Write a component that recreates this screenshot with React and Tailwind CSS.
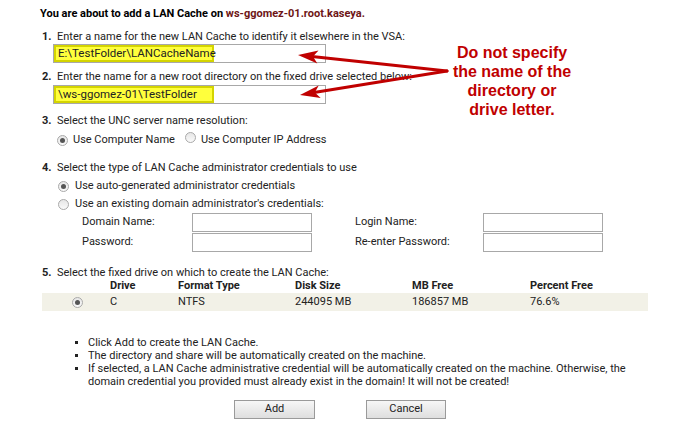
import React from "react";

const Radio = ({ checked }) => (
  <span className="inline-flex h-[11px] w-[11px] shrink-0 items-center justify-center rounded-full border border-[#a9a9a9] bg-gradient-to-b from-[#e6e6e6] to-[#fafafa]">
    {checked && <span className="h-[5px] w-[5px] rounded-full bg-[#555]" />}
  </span>
);

const Box = ({ className = "" }) => (
  <div className={"h-[19px] w-[120px] border border-[#a8a8a8] bg-white " + className} />
);

export default function App() {
  const font = { fontFamily: "Roboto, 'Liberation Sans', sans-serif" };
  return (
    <div className="relative h-[439px] w-[690px] overflow-hidden bg-white text-[11px] text-[#222]" style={font}>
      <div className="flex flex-col pl-[40px] pt-[7px]">
        <div className="h-[14px] leading-[14px] font-bold text-black">
          You are about to add a LAN Cache on <span className="text-[#6e1616]">ws-ggomez-01.root.kaseya.</span>
        </div>

        {/* 1 */}
        <div className="mt-[9px] flex h-[13px] items-center pl-[2px] leading-[13px]">
          <span className="w-[15px] font-bold">1.</span>
          <span>Enter a name for the new LAN Cache to identify it elsewhere in the VSA:</span>
        </div>
        <div className="relative ml-[13px] mt-[1px] h-[19px] w-[273px] border border-[#a8a8a8] bg-white">
          <div className="absolute left-[0px] top-[0px] flex h-[17px] w-[160px] items-center border-2 border-[#d4d400] bg-[#ffff3c] pl-[2px] text-[11.5px] text-[#222]">
            E:\TestFolder\LANCacheName
          </div>
        </div>

        {/* 2 */}
        <div className="mt-[7px] flex h-[13px] items-center pl-[2px] leading-[13px]">
          <span className="w-[15px] font-bold">2.</span>
          <span>Enter the name for a new root directory on the fixed drive selected below:</span>
        </div>
        <div className="relative ml-[13px] mt-[2px] h-[19px] w-[273px] border border-[#a8a8a8] bg-white">
          <div className="absolute left-[0px] top-[0px] flex h-[17px] w-[160px] items-center border-2 border-[#d4d400] bg-[#ffff3c] pl-[2px] text-[11.5px] text-[#222]">
            \ws-ggomez-01\TestFolder
          </div>
        </div>

        {/* 3 */}
        <div className="mt-[10px] flex h-[13px] items-center pl-[2px] leading-[13px]">
          <span className="w-[15px] font-bold">3.</span>
          <span>Select the UNC server name resolution:</span>
        </div>
        <div className="mt-[5px] flex h-[16px] items-center pl-[17px]">
          <Radio checked />
          <span className="ml-[5px]">Use Computer Name</span>
          <span className="ml-[10px]"><Radio /></span>
          <span className="ml-[5px]">Use Computer IP Address</span>
        </div>

        {/* 4 */}
        <div className="mt-[13px] flex h-[13px] items-center pl-[2px] leading-[13px]">
          <span className="w-[15px] font-bold">4.</span>
          <span>Select the type of LAN Cache administrator credentials to use</span>
        </div>
        <div className="mt-[4px] flex h-[16px] items-center pl-[18px]">
          <Radio checked />
          <span className="ml-[6px]">Use auto-generated administrator credentials</span>
        </div>
        <div className="mt-[2px] flex h-[16px] items-center pl-[18px]">
          <Radio />
          <span className="ml-[6px]">Use an existing domain administrator's credentials:</span>
        </div>
        <div className="mt-[1px] grid grid-cols-[110px_163px_128px_120px] gap-y-[1px] pl-[42px]">
          <div className="flex h-[19px] items-center">Domain Name:</div>
          <Box />
          <div className="flex h-[19px] items-center">Login Name:</div>
          <Box />
          <div className="flex h-[19px] items-center">Password:</div>
          <Box />
          <div className="flex h-[19px] items-center">Re-enter Password:</div>
          <Box />
        </div>

        {/* 5 */}
        <div className="mt-[14px] flex h-[13px] items-center pl-[2px] leading-[13px]">
          <span className="w-[15px] font-bold">5.</span>
          <span>Select the fixed drive on which to create the LAN Cache:</span>
        </div>
        <div className="mt-[1px] flex h-[12px] items-center font-bold">
          <span className="w-[70px]" />
          <span className="w-[68px]">Drive</span>
          <span className="w-[117px]">Format Type</span>
          <span className="w-[117px]">Disk Size</span>
          <span className="w-[118px]">MB Free</span>
          <span>Percent Free</span>
        </div>
        <div className="mt-[1px] flex h-[18px] w-[606px] items-center ml-[2px] bg-[#f2f1e7]">
          <span className="flex w-[68px] justify-start pl-[30px]"><Radio checked /></span>
          <span className="w-[68px]">C</span>
          <span className="w-[117px]">NTFS</span>
          <span className="w-[117px]">244095 MB</span>
          <span className="w-[118px]">186857 MB</span>
          <span>76.6%</span>
        </div>

        {/* bullets */}
        <ul className="mt-[25px] flex flex-col pl-[35px]">
          {[
            "Click Add to create the LAN Cache.",
            "The directory and share will be automatically created on the machine.",
          ].map((t) => (
            <li key={t} className="flex h-[13px] items-center leading-[13px]">
              <span className="mr-[10px] h-[3px] w-[3px] bg-[#222]" />
              {t}
            </li>
          ))}
          <li className="flex leading-[13px]">
            <span className="mr-[10px] mt-[5px] h-[3px] w-[3px] shrink-0 bg-[#222]" />
            <span className="w-[560px]">
              If selected, a LAN Cache administrative credential will be automatically created on the machine. Otherwise, the domain credential you provided must already exist in the domain! It will not be created!
            </span>
          </li>
        </ul>

        <div className="mt-[12px] flex pl-[194px]">
          <button className="h-[19px] w-[81px] border border-[#9a9a9a] bg-gradient-to-b from-[#f7f7f7] to-[#dedede] text-[11px] text-[#222]" style={font}>Add</button>
          <button className="ml-[51px] h-[19px] w-[80px] border border-[#9a9a9a] bg-gradient-to-b from-[#f7f7f7] to-[#dedede] text-[11px] text-[#222]" style={font}>Cancel</button>
        </div>
      </div>

      {/* annotation */}
      <div
        className="absolute left-[432px] top-[43px] w-[160px] text-center text-[16px] font-bold leading-[19px] text-[#c00000]"
        style={{ fontFamily: "'Liberation Sans', Arial, sans-serif" }}
      >
        Do not specify<br />the name of the<br />directory or<br />drive letter.
      </div>
      <svg className="pointer-events-none absolute left-0 top-0" width="690" height="439">
        <line x1="447" y1="71" x2="312" y2="56.5" stroke="#c00000" strokeWidth="3" strokeLinecap="round" />
        <polygon points="298,55 318.5,50.5 313,56.6 317.3,63.5" fill="#c00000" />
        <line x1="447" y1="71" x2="314" y2="92.6" stroke="#c00000" strokeWidth="3" strokeLinecap="round" />
        <polygon points="300,95 318.7,85.5 314.8,92.6 320.7,98" fill="#c00000" />
      </svg>
    </div>
  );
}
